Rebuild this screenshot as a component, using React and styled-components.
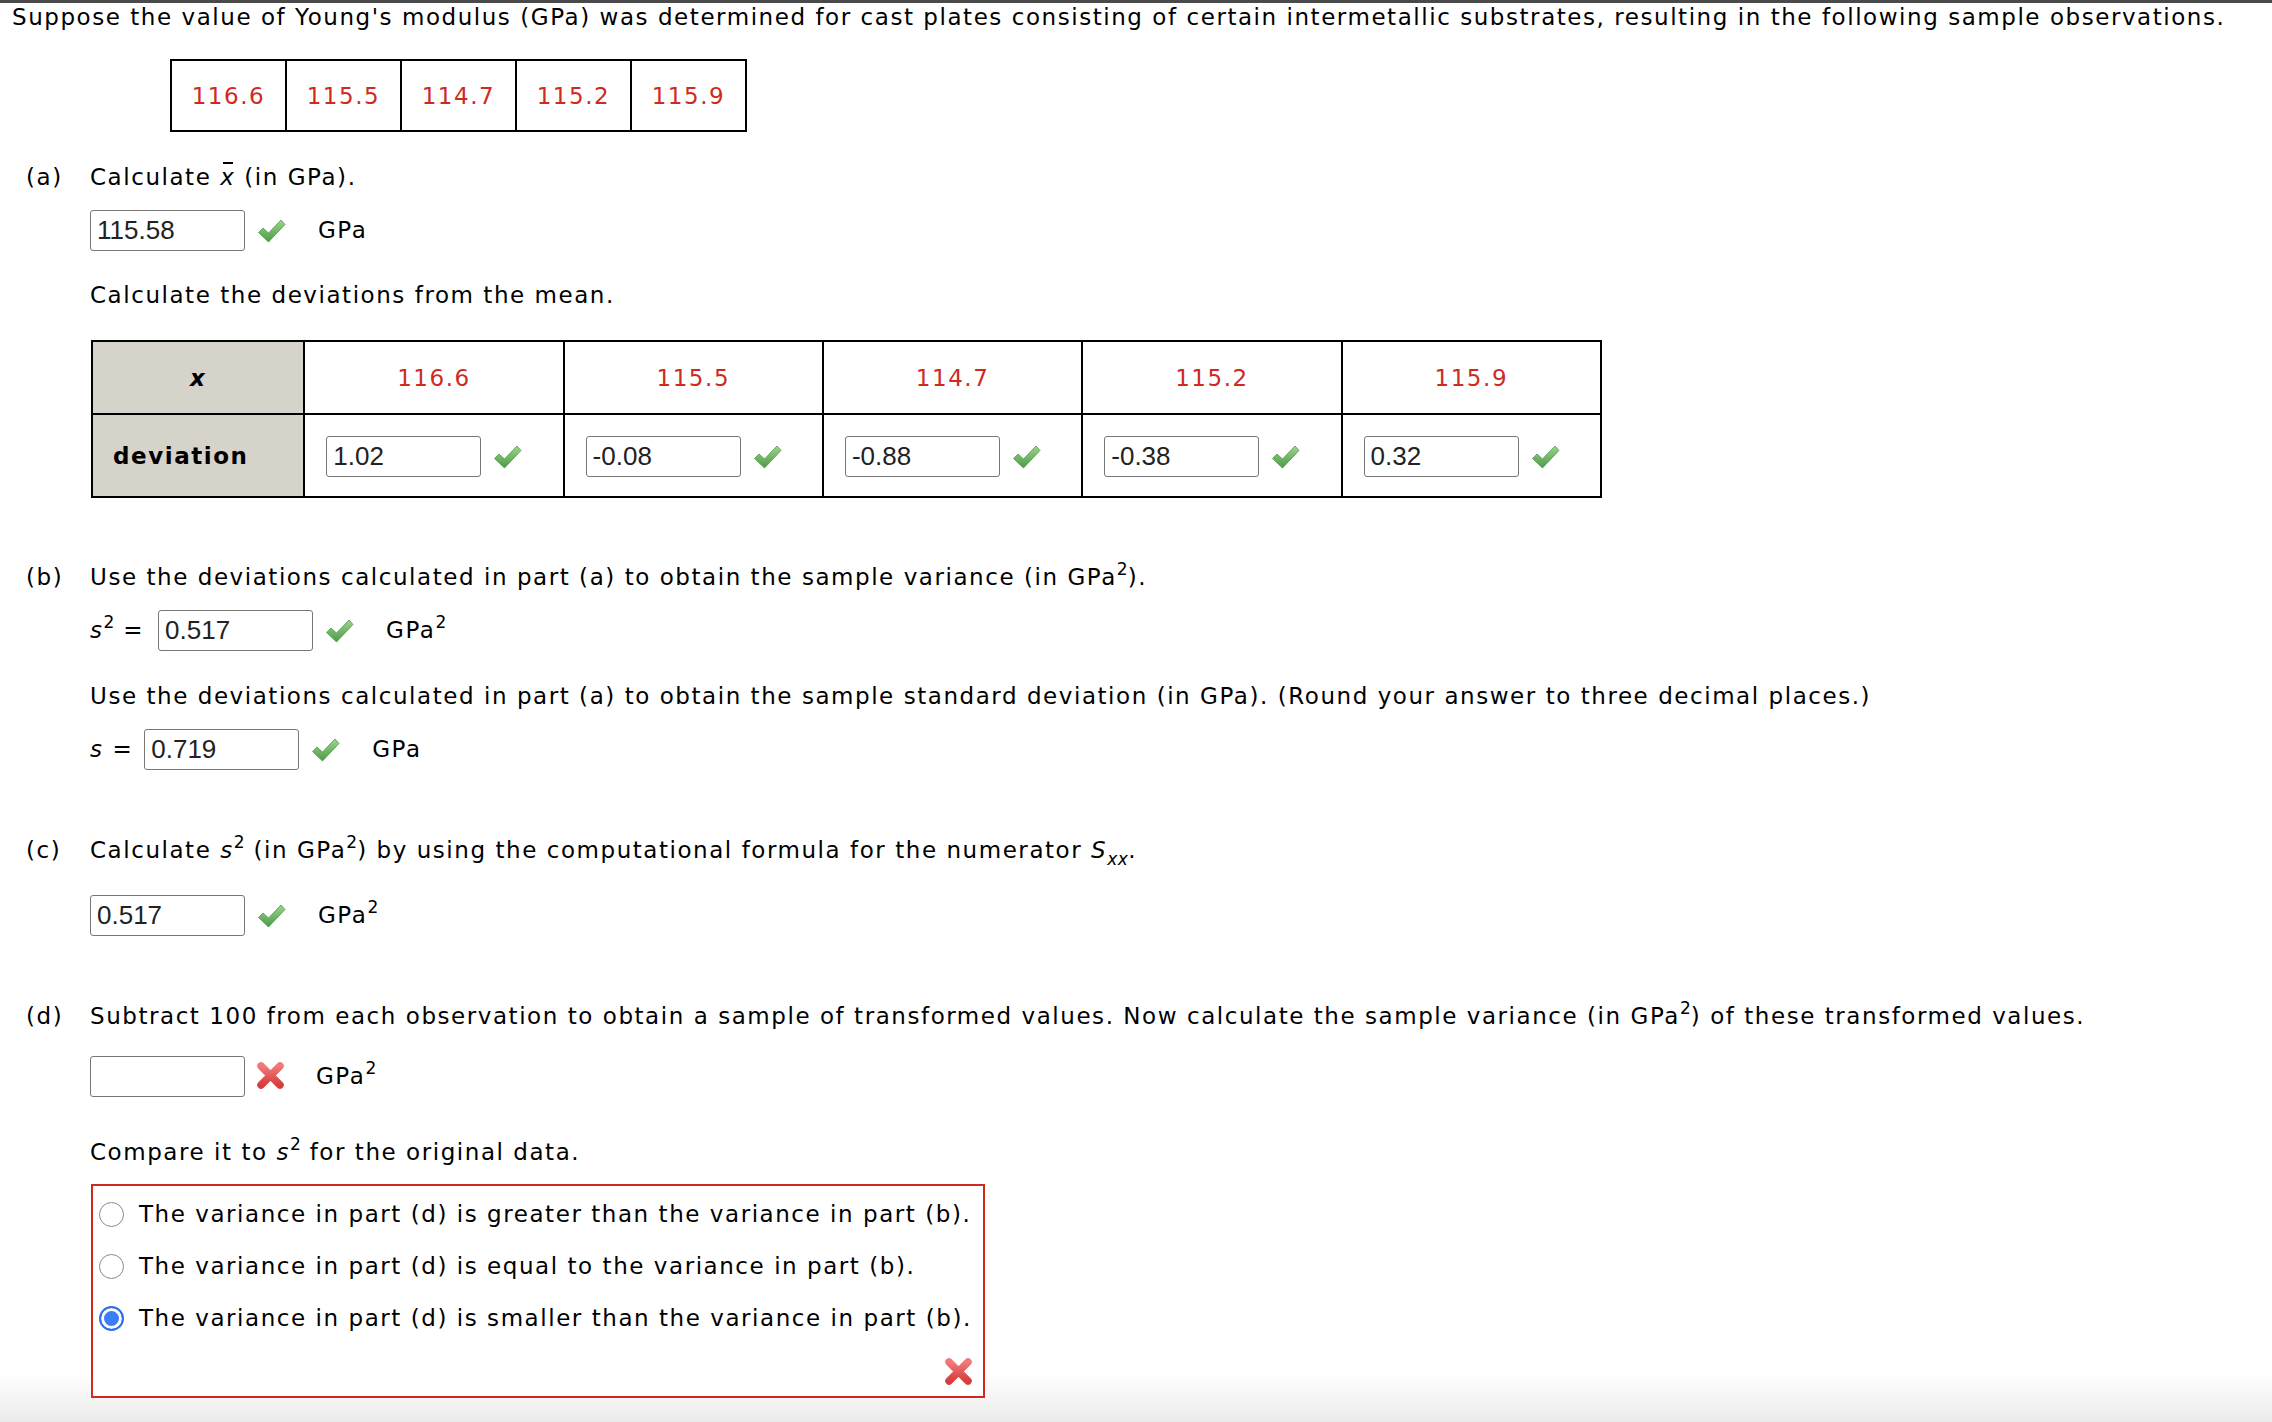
import React from 'react';
import styled, { createGlobalStyle } from 'styled-components';

const Global = createGlobalStyle`
  html, body { margin: 0; padding: 0; background: #fff; }
  body { font-family: "DejaVu Sans", Verdana, sans-serif; color: #000; }
`;

const RED = '#cf2a1f';

const Page = styled.div`
  min-height: 1422px;
  box-sizing: border-box;
  border-top: 3px solid #4a4a4a;
  padding-left: 12px;
  background: linear-gradient(180deg, #fff 0, #fff 1370px, #ebebeb 1419px);
  font-size: 23px;
  letter-spacing: 1.55px;
  display: flex;
  flex-direction: column;
  align-items: flex-start;
`;

const Intro = styled.p`
  margin: 0;
  line-height: 28px;
  white-space: nowrap;
`;

const DataTable = styled.table`
  border-collapse: collapse;
  margin: 28px 0 0 158px;
`;

const DataCell = styled.td`
  border: 2px solid #000;
  width: 113px;
  height: 69px;
  padding: 0;
  text-align: center;
  color: ${RED};
`;

const Section = styled.div`
  margin-top: ${p => p.$mt}px;
  display: flex;
  flex-direction: column;
  align-items: flex-start;
`;

const Heading = styled.div`
  display: flex;
  padding-left: 14px;
  line-height: 30px;
  white-space: nowrap;
`;

const Label = styled.span`
  width: 64px;
  flex: none;
`;

const Body = styled.div`
  margin-left: 78px;
  margin-top: ${p => p.$mt || 0}px;
  display: flex;
  flex-direction: column;
  align-items: flex-start;
`;

const Line = styled.p`
  margin: ${p => p.$mt || 0}px 0 0;
  line-height: 30px;
  white-space: nowrap;
`;

const InputRow = styled.div`
  display: flex;
  align-items: center;
  height: 42px;
  margin-top: ${p => p.$mt || 0}px;
`;

const AnswerInput = styled.input`
  box-sizing: border-box;
  width: 155px;
  height: 41px;
  border: 1.5px solid #777;
  border-radius: 3px;
  background: #fff;
  font-family: "Liberation Sans", Arial, sans-serif;
  font-size: 26px;
  letter-spacing: 0;
  color: #222;
  padding: 0 6px;
  margin: 0 0 0 ${p => p.$ml || 0}px;
  outline: none;
`;

const MarkBox = styled.span`
  display: inline-flex;
  margin-left: 12px;
  width: 29px;
  height: 29px;
  flex: none;
`;

const Unit = styled.span`
  margin-left: ${p => p.$ml || 32}px;
  white-space: nowrap;
`;

const Var = styled.i`
  font-style: italic;
`;

const Bar = styled.i`
  font-style: italic;
  position: relative;
  &::after {
    content: '';
    position: absolute;
    left: 3px;
    right: 2px;
    top: -2px;
    height: 1.6px;
    background: #000;
  }
`;

const Sup = styled.sup`
  font-size: 17px;
  line-height: 0;
  vertical-align: 10px;
  letter-spacing: 0;
`;

const Sub = styled.sub`
  font-size: 17px;
  font-style: italic;
  line-height: 0;
  vertical-align: -7px;
  letter-spacing: 0.5px;
`;

const Prefix = styled.span`
  white-space: nowrap;
`;

const DevTable = styled.table`
  border-collapse: collapse;
  table-layout: fixed;
  width: 1511px;
  margin: 30px 0 0 79px;
`;

const Col = styled.col`
  width: ${p => p.$w}px;
`;

const HeadCell = styled.th`
  border: 2px solid #000;
  background: #d6d3ca;
  height: ${p => p.$h}px;
  padding: 0 0 0 ${p => (p.$left ? 20 : 0)}px;
  text-align: ${p => (p.$left ? 'left' : 'center')};
  font-weight: bold;
  font-style: ${p => (p.$italic ? 'italic' : 'normal')};
`;

const ValCell = styled.td`
  border: 2px solid #000;
  height: ${p => p.$h}px;
  padding: 0;
  text-align: center;
  color: ${RED};
`;

const DevCell = styled.td`
  border: 2px solid #000;
  height: ${p => p.$h}px;
  padding: 0 0 0 21px;
`;

const DevInner = styled.div`
  display: flex;
  align-items: center;
  padding-top: 1px;
`;

const ChoiceBox = styled.div`
  margin: 17px 0 0 79px;
  border: 2px solid ${RED};
  padding: 2px 11px 11px 6px;
  background: #fff;
  display: flex;
  flex-direction: column;
`;

const Option = styled.label`
  display: flex;
  align-items: center;
  height: 52px;
  white-space: nowrap;
`;

const Radio = styled.span`
  box-sizing: border-box;
  width: 25px;
  height: 25px;
  border-radius: 50%;
  flex: none;
  margin-right: 15px;
  border: ${p => (p.$on ? '2px solid #2f6fe6' : '1.5px solid #8a8a8a')};
  background: ${p => (p.$on ? '#3a7ff6' : '#fff')};
  box-shadow: ${p => (p.$on ? 'inset 0 0 0 3px #fff' : 'none')};
`;

const XRow = styled.div`
  display: flex;
  justify-content: flex-end;
  margin-top: 14px;
`;

const CrossPlain = styled.span`
  display: inline-flex;
  width: 27px;
  height: 27px;
`;

const CheckSvg = () => (
  <svg width="29" height="29" viewBox="0 0 29 29">
    <defs>
      <linearGradient id="cg" x1="0" y1="0" x2="0" y2="1">
        <stop offset="0" stopColor="#9bd68a" />
        <stop offset="1" stopColor="#4c9a47" />
      </linearGradient>
    </defs>
    <path d="M1.5 16.5 L6 12 L11.5 17 L24 4 L28 8.5 L11.5 26 Z" fill="url(#cg)" stroke="#4e9a49" strokeWidth="0.8" strokeLinejoin="round" />
  </svg>
);

const CrossSvg = () => (
  <svg width="27" height="27" viewBox="0 0 27 27">
    <defs>
      <linearGradient id="xg" x1="0" y1="0" x2="0" y2="1">
        <stop offset="0" stopColor="#f07a7a" />
        <stop offset="1" stopColor="#d63d3d" />
      </linearGradient>
    </defs>
    <path d="M4 4 L23 23 M23 4 L4 23" stroke="url(#xg)" strokeWidth="7.5" strokeLinecap="round" />
  </svg>
);

const Check = () => (
  <MarkBox>
    <CheckSvg />
  </MarkBox>
);

const Cross = () => (
  <MarkBox>
    <CrossSvg />
  </MarkBox>
);

const values = ['116.6', '115.5', '114.7', '115.2', '115.9'];
const devs = ['1.02', '-0.08', '-0.88', '-0.38', '0.32'];

export default function App() {
  return (
    <>
      <Global />
      <Page>
        <Intro>
          Suppose the value of Young's modulus (GPa) was determined for cast plates consisting of certain intermetallic substrates, resulting in the following sample observations.
        </Intro>

        <DataTable>
          <tbody>
            <tr>
              {values.map(v => (
                <DataCell key={v}>{v}</DataCell>
              ))}
            </tr>
          </tbody>
        </DataTable>

        <Section $mt={30}>
          <Heading>
            <Label>(a)</Label>
            <span>
              Calculate <Bar>x</Bar> (in GPa).
            </span>
          </Heading>
          <Body $mt={17}>
            <InputRow>
              <AnswerInput defaultValue="115.58" readOnly />
              <Check />
              <Unit>GPa</Unit>
            </InputRow>
            <Line $mt={29}>Calculate the deviations from the mean.</Line>
          </Body>
          <DevTable>
            <colgroup>
              <Col $w={212} />
              {values.map(v => (
                <Col key={v} $w={259} />
              ))}
            </colgroup>
            <tbody>
              <tr>
                <HeadCell $h={71} $italic>x</HeadCell>
                {values.map(v => (
                  <ValCell key={v} $h={71}>{v}</ValCell>
                ))}
              </tr>
              <tr>
                <HeadCell $h={81} $left>deviation</HeadCell>
                {devs.map(d => (
                  <DevCell key={d} $h={81}>
                    <DevInner>
                      <AnswerInput defaultValue={d} readOnly />
                      <Check />
                    </DevInner>
                  </DevCell>
                ))}
              </tr>
            </tbody>
          </DevTable>
        </Section>

        <Section $mt={64}>
          <Heading>
            <Label>(b)</Label>
            <span>
              Use the deviations calculated in part (a) to obtain the sample variance (in GPa<Sup>2</Sup>).
            </span>
          </Heading>
          <Body $mt={17}>
            <InputRow>
              <Prefix>
                <Var>s</Var>
                <Sup>2</Sup> =
              </Prefix>
              <AnswerInput $ml={14} defaultValue="0.517" readOnly />
              <Check />
              <Unit>
                GPa<Sup>2</Sup>
              </Unit>
            </InputRow>
            <Line $mt={30}>
              Use the deviations calculated in part (a) to obtain the sample standard deviation (in GPa). (Round your answer to three decimal places.)
            </Line>
            <InputRow $mt={17}>
              <Prefix>
                <Var>s</Var> =
              </Prefix>
              <AnswerInput $ml={11} defaultValue="0.719" readOnly />
              <Check />
              <Unit>GPa</Unit>
            </InputRow>
          </Body>
        </Section>

        <Section $mt={65}>
          <Heading>
            <Label>(c)</Label>
            <span>
              Calculate <Var>s</Var>
              <Sup>2</Sup> (in GPa<Sup>2</Sup>) by using the computational formula for the numerator <Var>S</Var>
              <Sub>xx</Sub>.
            </span>
          </Heading>
          <Body $mt={29}>
            <InputRow>
              <AnswerInput defaultValue="0.517" readOnly />
              <Check />
              <Unit>
                GPa<Sup>2</Sup>
              </Unit>
            </InputRow>
          </Body>
        </Section>

        <Section $mt={65}>
          <Heading>
            <Label>(d)</Label>
            <span>
              Subtract 100 from each observation to obtain a sample of transformed values. Now calculate the sample variance (in GPa<Sup>2</Sup>) of these transformed values.
            </span>
          </Heading>
          <Body $mt={24}>
            <InputRow>
              <AnswerInput defaultValue="" readOnly />
              <Cross />
              <Unit $ml={30}>
                GPa<Sup>2</Sup>
              </Unit>
            </InputRow>
            <Line $mt={40}>
              Compare it to <Var>s</Var>
              <Sup>2</Sup> for the original data.
            </Line>
          </Body>
          <ChoiceBox>
            <Option>
              <Radio />
              The variance in part (d) is greater than the variance in part (b).
            </Option>
            <Option>
              <Radio />
              The variance in part (d) is equal to the variance in part (b).
            </Option>
            <Option>
              <Radio $on />
              The variance in part (d) is smaller than the variance in part (b).
            </Option>
            <XRow>
              <CrossPlain>
                <CrossSvg />
              </CrossPlain>
            </XRow>
          </ChoiceBox>
        </Section>
      </Page>
    </>
  );
}
